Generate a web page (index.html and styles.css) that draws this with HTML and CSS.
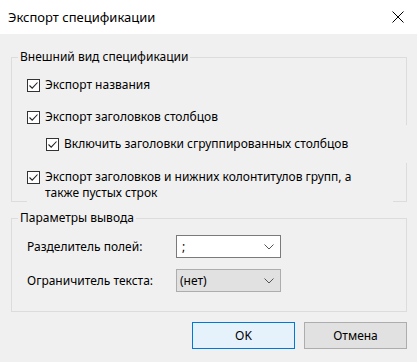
FILE: index.html
```html
<!DOCTYPE html>
<html lang="ru">
<head>
    <meta charset="UTF-8">
    <meta name="viewport" content="width=device-width, initial-scale=1.0">
    <title>Экспорт спецификации</title>
    <link rel="stylesheet" href="styles.css">
</head>
<body>

    <div class="title-bar">
        <span class="title">Экспорт спецификации</span>
        <svg class="close" width="12" height="12" viewBox="0 0 12 12">
            <path d="M0.5 0.5 L11.5 11.5 M11.5 0.5 L0.5 11.5" stroke="#000" stroke-width="1" fill="none"/>
        </svg>
    </div>

    <div class="dialog">
        <!-- Appearance -->
        <fieldset class="group group-view">
            <legend>Внешний вид спецификации</legend>
            <label class="check row-title">
                <span class="box"><svg width="11" height="11" viewBox="0 0 11 11"><path d="M1.5 5.5 L4.2 8.2 L9.5 2.5" stroke="#222" stroke-width="1.1" fill="none"/></svg></span>
                Экспорт названия
            </label>
            <label class="check row-headers">
                <span class="box"><svg width="11" height="11" viewBox="0 0 11 11"><path d="M1.5 5.5 L4.2 8.2 L9.5 2.5" stroke="#222" stroke-width="1.1" fill="none"/></svg></span>
                Экспорт заголовков столбцов
            </label>
            <label class="check row-grouped">
                <span class="box"><svg width="11" height="11" viewBox="0 0 11 11"><path d="M1.5 5.5 L4.2 8.2 L9.5 2.5" stroke="#222" stroke-width="1.1" fill="none"/></svg></span>
                Включить заголовки сгруппированных столбцов
            </label>
            <label class="check row-footers">
                <span class="box"><svg width="11" height="11" viewBox="0 0 11 11"><path d="M1.5 5.5 L4.2 8.2 L9.5 2.5" stroke="#222" stroke-width="1.1" fill="none"/></svg></span>
                <span>Экспорт заголовков и нижних колонтитулов групп, а<br>также пустых строк</span>
            </label>
        </fieldset>

        <!-- Output -->
        <fieldset class="group group-output">
            <legend>Параметры вывода</legend>
            <div class="field">
                <span class="field-label">Разделитель полей:</span>
                <div class="select">
                    <span>;</span>
                    <svg class="chevron" width="10" height="6" viewBox="0 0 10 6"><path d="M0.5 0.5 L5 5 L9.5 0.5" stroke="#555" stroke-width="1" fill="none"/></svg>
                </div>
            </div>
            <div class="field">
                <span class="field-label">Ограничитель текста:</span>
                <div class="select select-disabled">
                    <span>(нет)</span>
                    <svg class="chevron" width="10" height="6" viewBox="0 0 10 6"><path d="M0.5 0.5 L5 5 L9.5 0.5" stroke="#555" stroke-width="1" fill="none"/></svg>
                </div>
            </div>
        </fieldset>

        <div class="buttons">
            <button class="btn btn-default">OK</button>
            <button class="btn">Отмена</button>
        </div>
    </div>

</body>
</html>
```

FILE: styles.css
```css
/* Basic Reset */
* {
    margin: 0;
    padding: 0;
    box-sizing: border-box;
}

body {
    font-family: 'Noto Sans', sans-serif;
    font-size: 12px;
    line-height: 16px;
    color: #000;
    background-color: #f0f0f0;
    width: 417px;
    height: 362px;
    overflow: hidden;
}

.title-bar {
    height: 34px;
    background-color: #fff;
    display: flex;
    align-items: center;
    justify-content: space-between;
    padding: 0 13px 0 8px;
}

.title {
    font-size: 13px;
    line-height: 20px;
}

.dialog {
    padding: 15px 10px 0 11px;
}

/* Group boxes */
.group {
    border: 1px solid #dcdcdc;
    display: flex;
    flex-direction: column;
    align-items: flex-start;
    min-width: 0;
}

.group legend {
    margin-left: 6px;
    padding: 0 2px;
    line-height: 16px;
}

.group-output {
    margin-top: 8px;
    padding-bottom: 19px;
}

/* Checkboxes */
.check {
    display: flex;
    align-items: center;
    gap: 5px;
    background-color: #f0f0f0;
}

.box {
    width: 13px;
    height: 13px;
    border: 1px solid #333;
    background-color: #fff;
    display: flex;
    align-items: center;
    justify-content: center;
    flex-shrink: 0;
}

.row-title {
    margin: 12px 0 0 15px;
}

.row-headers {
    margin: 16px 0 0 15px;
}

.row-grouped {
    margin: 0 -2px 0 34px;
    padding: 11px 0;
    align-self: stretch;
}

.row-footers {
    margin: 0 0 -4px 15px;
    padding: 6px 0 4px;
    width: 366px;
    align-items: flex-start;
}

.row-footers .box {
    margin-top: 2px;
}

/* Fields */
.field {
    display: flex;
    align-items: center;
    margin: 9px 0 0 15px;
}

.field + .field {
    margin-top: 11px;
}

.field-label {
    width: 149px;
}

.select {
    width: 105px;
    height: 23px;
    border: 1px solid #7a7a7a;
    background-color: #fff;
    display: flex;
    align-items: center;
    justify-content: space-between;
    padding: 0 6px 0 5px;
}

.select-disabled {
    background-color: #e1e1e1;
    border-color: #adadad;
    padding-left: 3px;
}

/* Buttons */
.buttons {
    display: flex;
    justify-content: flex-end;
    gap: 9px;
    margin-top: 10px;
}

.btn {
    width: 103px;
    height: 27px;
    font-family: 'Noto Sans', sans-serif;
    font-size: 12px;
    color: #000;
    background-color: #e1e1e1;
    border: 1px solid #adadad;
}

.btn-default {
    background-color: #e5f1fb;
    border-color: #0078d7;
}
```
